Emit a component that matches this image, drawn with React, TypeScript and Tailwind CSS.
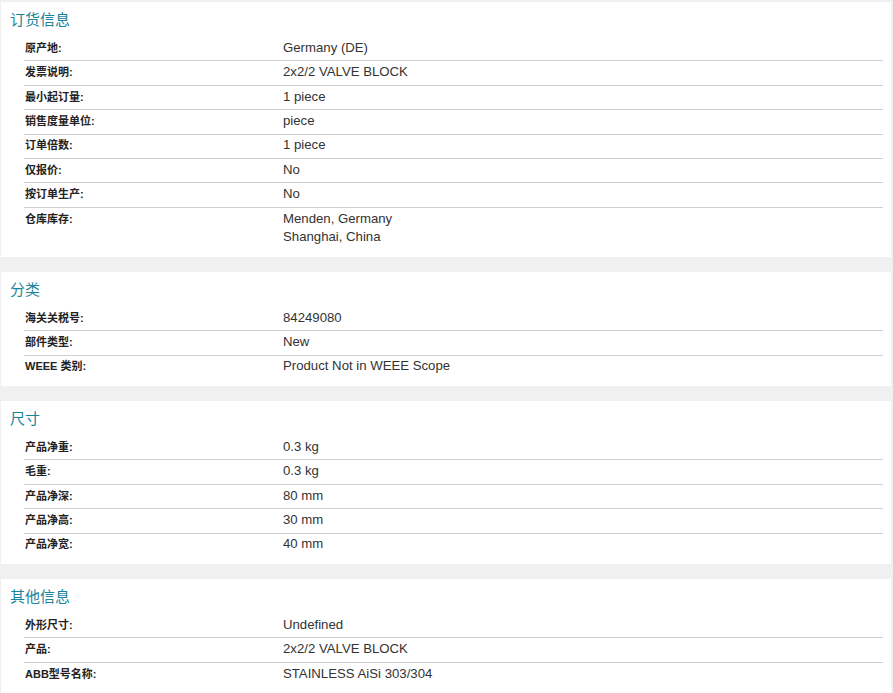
import React from "react";

type Row = { label: string; value: string[] };
type Section = { title: string; rows: Row[] };

const sections: Section[] = [
  {
    title: "订货信息",
    rows: [
      { label: "原产地:", value: ["Germany (DE)"] },
      { label: "发票说明:", value: ["2x2/2 VALVE BLOCK"] },
      { label: "最小起订量:", value: ["1 piece"] },
      { label: "销售度量单位:", value: ["piece"] },
      { label: "订单倍数:", value: ["1 piece"] },
      { label: "仅报价:", value: ["No"] },
      { label: "按订单生产:", value: ["No"] },
      { label: "仓库库存:", value: ["Menden, Germany", "Shanghai, China"] },
    ],
  },
  {
    title: "分类",
    rows: [
      { label: "海关关税号:", value: ["84249080"] },
      { label: "部件类型:", value: ["New"] },
      { label: "WEEE 类别:", value: ["Product Not in WEEE Scope"] },
    ],
  },
  {
    title: "尺寸",
    rows: [
      { label: "产品净重:", value: ["0.3 kg"] },
      { label: "毛重:", value: ["0.3 kg"] },
      { label: "产品净深:", value: ["80 mm"] },
      { label: "产品净高:", value: ["30 mm"] },
      { label: "产品净宽:", value: ["40 mm"] },
    ],
  },
  {
    title: "其他信息",
    rows: [
      { label: "外形尺寸:", value: ["Undefined"] },
      { label: "产品:", value: ["2x2/2 VALVE BLOCK"] },
      { label: "ABB型号名称:", value: ["STAINLESS AiSi 303/304"] },
    ],
  },
];

export default function App() {
  return (
    <div
      className="w-[893px] h-[693px] overflow-hidden bg-[#f0f0f0] pt-[2px] pl-[1px] pr-[2px] flex flex-col gap-[15px]"
      style={{ fontFamily: '"Liberation Sans", Arial, "Noto Sans CJK SC", sans-serif' }}
    >
      {sections.map((s) => (
        <div key={s.title} className="bg-white pt-[9px] pb-[7px] shrink-0">
          <div className="pl-[9px] text-[15px] leading-[18px] text-[#1a8499]">{s.title}</div>
          <div className="mt-[8px] ml-[23px] mr-[8px]">
            {s.rows.map((r, i) => (
              <div
                key={r.label}
                className={
                  "flex items-start pt-[1.8px] pb-[3.06px] " +
                  (i < s.rows.length - 1 ? "border-b border-[#cfcfcf]" : "")
                }
              >
                <div className="w-[259px] shrink-0 pl-[1px] text-[11px] font-bold leading-[18.57px] text-[#222]">
                  {r.label}
                </div>
                <div className="text-[13.2px] leading-[18.57px] text-[#333]">
                  {r.value.map((v) => (
                    <div key={v}>{v}</div>
                  ))}
                </div>
              </div>
            ))}
          </div>
        </div>
      ))}
    </div>
  );
}
